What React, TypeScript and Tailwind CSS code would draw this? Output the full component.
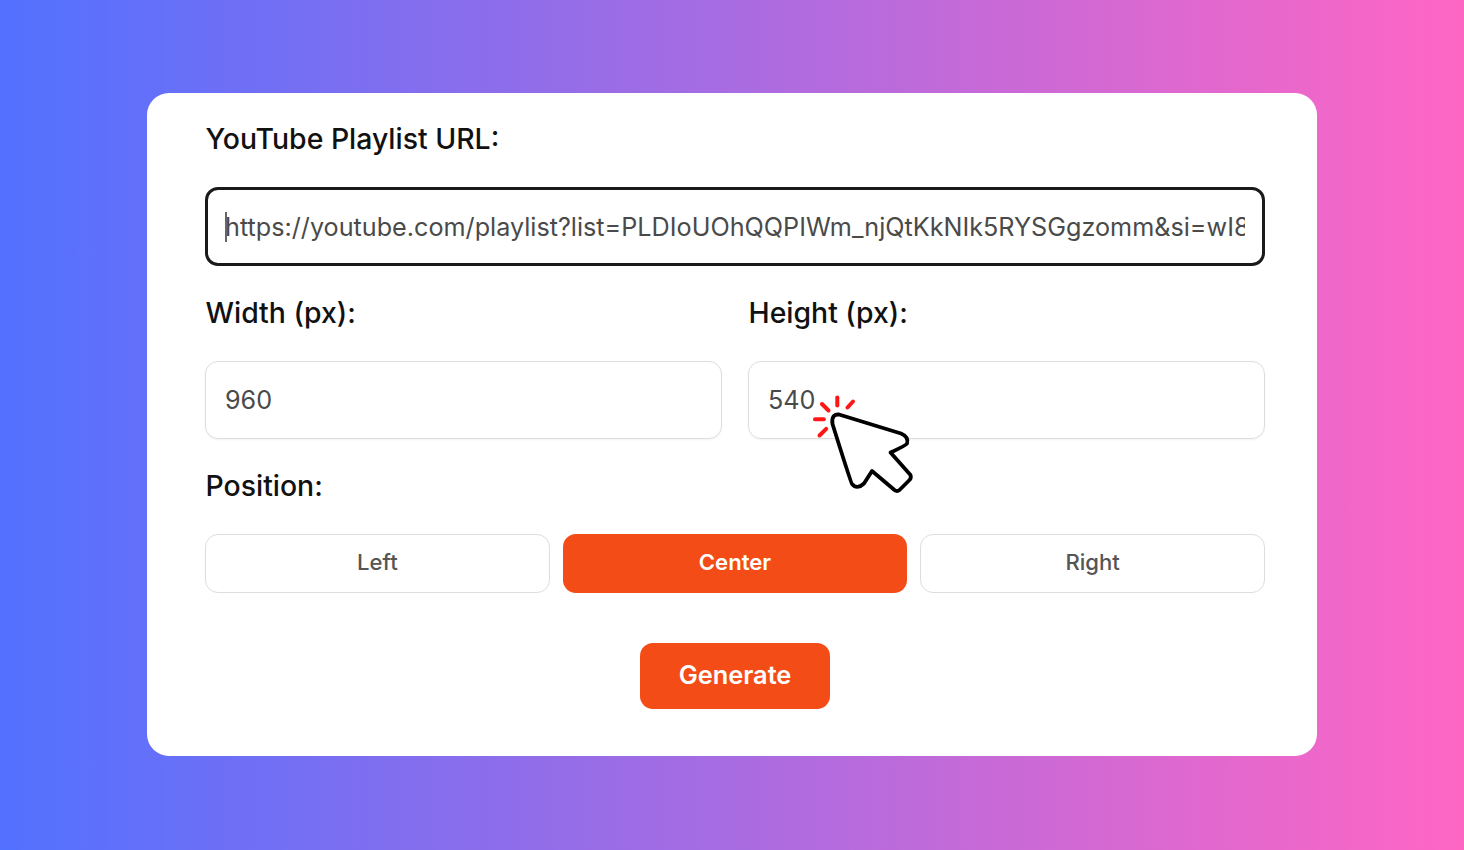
const font = "[font-family:Inter,'Liberation_Sans',sans-serif]"

function Label({ children }: { children: string }) {
  return <label className="block h-10 pl-[0.5px] text-[28.4px] leading-10 font-[470] text-[#111111]">{children}</label>
}

function ClickCursor() {
  return (
    <svg className="absolute left-[653px] top-[287px]" width="130" height="120" viewBox="0 0 130 120" fill="none">
      <g stroke="#ff1616" strokeWidth="4" strokeLinecap="round">
        <path d="M37.3 17.5V25.5" />
        <path d="M53 21.5L47.5 27.5" />
        <path d="M22 24L28.5 30.5" />
        <path d="M15 39.3H23.8" />
        <path d="M19.5 55.5L26.2 48.8" />
      </g>
      <path
        d="M39 34.5L101 53.5Q109 57 107 63.5Q106 65.5 90.5 72.5L110.5 95Q111.5 98 109.5 100L99.5 110Q97 112 94.5 110L72 91L64 103.5Q57 110 52 104Q51 103 32.5 44Q31 34 39 34.5Z"
        fill="#ffffff"
        stroke="#000000"
        strokeWidth="3.8"
        strokeLinejoin="round"
      />
    </svg>
  )
}

export default function App() {
  return (
    <div className={`h-[850px] flex justify-center pt-[93px] bg-[linear-gradient(90deg,#5271ff,#ff66c4)] ${font}`}>
      <div className="relative w-[1170px] h-[663px] bg-white rounded-[22px] pl-[58px] pr-[52px] pt-[26px]">
        <Label>YouTube Playlist URL:</Label>
        <div className="relative mt-[28px]">
          <input
            readOnly
            value="https://youtube.com/playlist?list=PLDIoUOhQQPIWm_njQtKkNIk5RYSGgzomm&si=wI8xT2pLq"
            className="w-full h-[79px] px-[17px] bg-white border-[3px] border-[#1a1a1a] rounded-[13px] text-[25.2px] text-[#4a4a4a] outline-none"
          />
          <div className="absolute left-[20px] top-[25px] w-[2px] h-[30px] bg-[#666666]" />
        </div>

        <div className="grid grid-cols-2 gap-[26px] mt-[27px]">
          <div>
            <Label>Width (px):</Label>
            <input
              readOnly
              value="960"
              className="w-full h-[78px] mt-[28px] px-[19px] pb-[1px] border border-[#dddddd] rounded-[13px] text-[25.2px] text-[#4a4a4a] outline-none shadow-[0_1px_2px_rgba(0,0,0,0.05)]"
            />
          </div>
          <div>
            <Label>Height (px):</Label>
            <input
              readOnly
              value="540"
              className="w-full h-[78px] mt-[28px] px-[19px] pb-[1px] border border-[#dddddd] rounded-[13px] text-[25.2px] text-[#4a4a4a] outline-none shadow-[0_1px_2px_rgba(0,0,0,0.05)]"
            />
          </div>
        </div>

        <div className="mt-[27px]">
          <Label>Position:</Label>
        </div>
        <div className="grid grid-cols-3 gap-[12.8px] mt-[28px]">
          <button className="h-[59px] pb-[1px] bg-white border border-[#dddddd] rounded-[13px] text-[22.1px] font-medium text-[#555555]">Left</button>
          <button className="h-[59px] pb-[1px] bg-[#f44c17] rounded-[13px] text-[22.1px] font-semibold text-white">Center</button>
          <button className="h-[59px] pb-[1px] bg-white border border-[#dddddd] rounded-[13px] text-[22.1px] font-medium text-[#555555]">Right</button>
        </div>

        <div className="flex justify-center mt-[50px]">
          <button className="w-[190px] h-[66px] pb-[1px] bg-[#f44c17] rounded-[13px] text-[25.4px] font-semibold text-white">Generate</button>
        </div>

        <ClickCursor />
      </div>
    </div>
  )
}
